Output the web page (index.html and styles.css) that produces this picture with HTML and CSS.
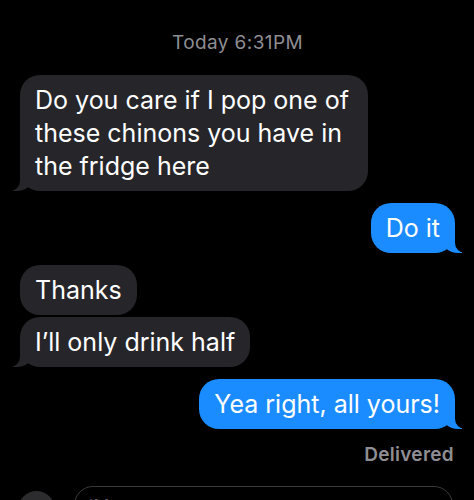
FILE: index.html
```html
<!DOCTYPE html>
<html lang="en">

<head>
    <meta charset="UTF-8">
    <title>Messages</title>
    <link rel="stylesheet" href="styles.css">
</head>

<body>
    <div class="thread">
        <p class="stamp">Today 6:31PM</p>

        <div class="bubble them tail">Do you care if I pop one of these chinons you have in the fridge here</div>
        <div class="bubble me tail">Do it</div>
        <div class="bubble them">Thanks</div>
        <div class="bubble them tail next">I’ll only drink half</div>
        <div class="bubble me tail">Yea right, all yours!</div>

        <p class="status">Delivered</p>
    </div>

    <div class="compose">
        <div class="apps"></div>
        <div class="field">iMessage</div>
    </div>
</body>

</html>
```

FILE: styles.css
```css
html,
body {
    height: 500px;
    overflow: hidden;
}

body {
    margin: 0;
    background-color: black;
    font-family: "Inter", "Liberation Sans", sans-serif;
    color: white;
}

.thread {
    display: flex;
    flex-direction: column;
    align-items: flex-start;
    padding: 34px 19px 0 20px;
}

.stamp {
    align-self: center;
    margin: 0 0 23px 0;
    font-size: 19px;
    letter-spacing: 0.4px;
    line-height: 18px;
    color: #8e8e93;
}

.bubble {
    position: relative;
    max-width: 318px;
    padding: 8.5px 15px;
    border-radius: 20px;
    font-size: 25px;
    line-height: 33px;
    margin-bottom: 12px;
}

.them {
    background-color: #26252a;
}

.me {
    align-self: flex-end;
    background-color: #1b8cff;
}

.them + .them {
    margin-top: -10px;
}

/* the little curled tail under the last bubble of a group */
.tail::before,
.tail::after {
    content: "";
    position: absolute;
    bottom: 0;
    height: 20px;
}

.them.tail::before {
    left: -7px;
    width: 20px;
    background-color: #26252a;
    border-bottom-right-radius: 16px 14px;
}

.them.tail::after {
    left: -26px;
    width: 26px;
    background-color: black;
    border-bottom-right-radius: 10px;
}

.me.tail::before {
    right: -7px;
    width: 20px;
    background-color: #1b8cff;
    border-bottom-left-radius: 16px 14px;
}

.me.tail::after {
    right: -26px;
    width: 26px;
    background-color: black;
    border-bottom-left-radius: 10px;
}

.status {
    align-self: flex-end;
    margin: 3px 1px 0 0;
    font-size: 19px;
    letter-spacing: 0.3px;
    font-weight: 600;
    line-height: 22px;
    color: #8e8e93;
}

.compose {
    display: flex;
    align-items: flex-start;
    gap: 19px;
    padding: 0 21px 0 18px;
    margin-top: 20px;
}

.apps {
    flex: none;
    width: 37px;
    height: 37px;
    margin-top: 5px;
    border-radius: 50%;
    background-color: #2c2c2e;
}

.field {
    flex: 1;
    height: 38px;
    padding: 9px 14px;
    border: 1px solid #3a3a3c;
    border-radius: 19px;
    font-size: 18px;
    color: #5e5e62;
}
```
